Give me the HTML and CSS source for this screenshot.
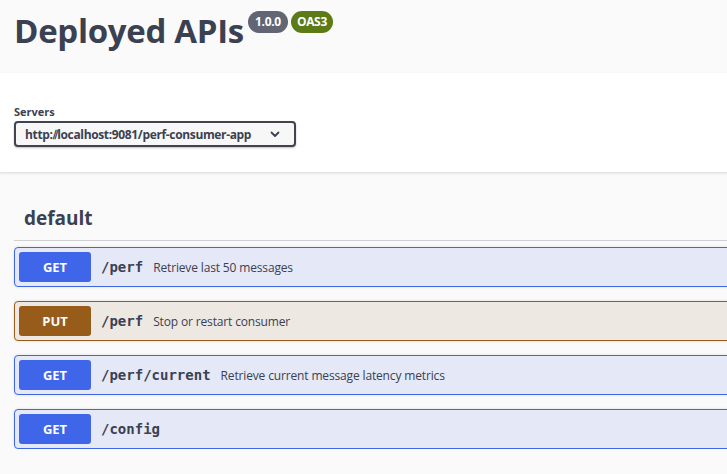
FILE: index.html
```html
<!DOCTYPE html>
<html>
<head>
<meta charset="utf-8">
<link rel="stylesheet" href="styles.css">
</head>
<body>
<div class="page">
  <header class="info">
    <h1 class="title">Deployed APIs</h1>
    <span class="badges">
      <span class="badge badge-version">1.0.0</span>
      <span class="badge badge-oas">OAS3</span>
    </span>
  </header>
  <section class="servers">
    <div class="servers-label">Servers</div>
    <div class="select">
      <span>http:⫽localhost:9081/perf-consumer-app</span>
      <svg class="chev" width="10" height="7" viewBox="0 0 10 7"><path d="M1.5 1.5 L5 5 L8.5 1.5" fill="none" stroke="#3b4151" stroke-width="1.8" stroke-linecap="round" stroke-linejoin="round"/></svg>
    </div>
  </section>
  <section class="tags">
    <h3 class="tag-title">default</h3>
    <div class="ops">
      <div class="op op-get">
        <span class="method">GET</span>
        <span class="path">/perf</span>
        <span class="desc">Retrieve last 50 messages</span>
      </div>
      <div class="op op-put">
        <span class="method">PUT</span>
        <span class="path">/perf</span>
        <span class="desc">Stop or restart consumer</span>
      </div>
      <div class="op op-get">
        <span class="method">GET</span>
        <span class="path">/perf/current</span>
        <span class="desc">Retrieve current message latency metrics</span>
      </div>
      <div class="op op-get">
        <span class="method">GET</span>
        <span class="path">/config</span>
      </div>
    </div>
  </section>
</div>
</body>
</html>
```
FILE: styles.css
```css
html, body {
  margin: 0;
  padding: 0;
  background: #fafafa;
  overflow: hidden;
}
body {
  font-family: "Open Sans", "Noto Sans", sans-serif;
  color: #3b4151;
}
.page {
  width: 780px;
}
.info {
  height: 73px;
  background: #fafafa;
  display: flex;
  align-items: flex-start;
  padding-left: 14px;
  box-sizing: border-box;
}
.title {
  margin: 6px 0 0 0;
  font-size: 33px;
  font-weight: 700;
  line-height: 50px;
  color: #3b4151;
  letter-spacing: -0.3px;
}
.badges {
  display: flex;
  gap: 3px;
  margin-top: 11px;
  margin-left: 4px;
}
.badge {
  display: inline-block;
  height: 22px;
  line-height: 22px;
  padding: 0 6px;
  border-radius: 11px;
  font-size: 12px;
  font-weight: 700;
  color: #fff;
  letter-spacing: -0.3px;
}
.badge-version {
  background: #626674;
  padding: 0 7px;
}
.badge-oas {
  background: #5c7a16;
}
.servers {
  background: #fff;
  height: 100px;
  box-sizing: border-box;
  padding: 32px 0 0 14px;
  border-bottom: 1px solid #e3e3e3;
  box-shadow: 0 1px 2px rgba(0,0,0,0.08);
}
.servers-label {
  font-size: 11px;
  font-weight: 700;
  line-height: 14px;
  margin-bottom: 2px;
}
.select {
  width: 282px;
  height: 26px;
  box-sizing: border-box;
  border: 2px solid #41444e;
  border-radius: 4px;
  background: #f7f7f7;
  box-shadow: 0 1px 2px rgba(0,0,0,0.25);
  display: flex;
  align-items: center;
  justify-content: space-between;
  padding: 0 14px 0 9px;
  font-size: 12px;
  font-weight: 700;
  letter-spacing: -0.35px;
}
.chev {
  display: block;
}
.tags {
  padding: 26px 0 0 14px;
}
.tag-title {
  margin: 0;
  padding: 0 0 0 10px;
  font-size: 19px;
  font-weight: 700;
  line-height: 39px;
  height: 42px;
  box-sizing: border-box;
  border-bottom: 1px solid #cfd0d3;
}
.ops {
  display: flex;
  flex-direction: column;
  gap: 14px;
  padding-top: 6px;
}
.op {
  height: 40px;
  box-sizing: border-box;
  border: 1px solid;
  border-radius: 4px;
  display: flex;
  align-items: center;
  padding-left: 4px;
  box-shadow: 0 0 3px rgba(0,0,0,0.12);
}
.op-get {
  background: #e4e8f7;
  border-color: #3f66e3;
}
.op-put {
  background: #ede8e2;
  border-color: #985b1b;
}
.method {
  width: 72px;
  height: 30px;
  border-radius: 3px;
  color: #fff;
  font-size: 13px;
  font-weight: 700;
  display: flex;
  align-items: center;
  justify-content: center;
}
.op-get .method { background: #3f66e8; }
.op-put .method { background: #975b1a; }
.path {
  font-family: "DejaVu Sans Mono", "Liberation Mono", monospace;
  font-weight: 700;
  font-size: 14px;
  margin-left: 10px;
  color: #3b4151;
}
.desc {
  font-size: 12px;
  margin-left: 10px;
  color: #3b4151;
  letter-spacing: -0.15px;
}
```
